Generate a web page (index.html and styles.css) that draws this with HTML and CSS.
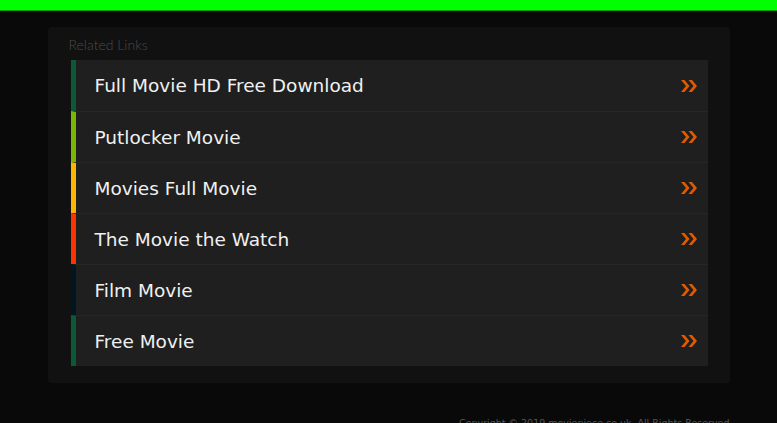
FILE: index.html
```html
<!DOCTYPE html>
<html lang="en">
<head>
    <meta charset="UTF-8">
    <meta name="viewport" content="width=device-width, initial-scale=1.0">
    <title>Related Links</title>
    <link rel="stylesheet" href="styles.css">
</head>
<body>
<div class="top-bar"></div>

<div class="wrapper">
    <div class="panel">
        <h2 class="panel-title">Related Links</h2>
        <ul class="links">
            <li class="link c1"><span>Full Movie HD Free Download</span><svg class="arrow" viewBox="0 0 18 14"><path d="M1 1 L6 7 L1 13 H4.5 L9.5 7 L4.5 1 Z M8.5 1 L13.5 7 L8.5 13 H12 L17 7 L12 1 Z"/></svg></li>
            <li class="link c2"><span>Putlocker Movie</span><svg class="arrow" viewBox="0 0 18 14"><path d="M1 1 L6 7 L1 13 H4.5 L9.5 7 L4.5 1 Z M8.5 1 L13.5 7 L8.5 13 H12 L17 7 L12 1 Z"/></svg></li>
            <li class="link c3"><span>Movies Full Movie</span><svg class="arrow" viewBox="0 0 18 14"><path d="M1 1 L6 7 L1 13 H4.5 L9.5 7 L4.5 1 Z M8.5 1 L13.5 7 L8.5 13 H12 L17 7 L12 1 Z"/></svg></li>
            <li class="link c4"><span>The Movie the Watch</span><svg class="arrow" viewBox="0 0 18 14"><path d="M1 1 L6 7 L1 13 H4.5 L9.5 7 L4.5 1 Z M8.5 1 L13.5 7 L8.5 13 H12 L17 7 L12 1 Z"/></svg></li>
            <li class="link c5"><span>Film Movie</span><svg class="arrow" viewBox="0 0 18 14"><path d="M1 1 L6 7 L1 13 H4.5 L9.5 7 L4.5 1 Z M8.5 1 L13.5 7 L8.5 13 H12 L17 7 L12 1 Z"/></svg></li>
            <li class="link c6"><span>Free Movie</span><svg class="arrow" viewBox="0 0 18 14"><path d="M1 1 L6 7 L1 13 H4.5 L9.5 7 L4.5 1 Z M8.5 1 L13.5 7 L8.5 13 H12 L17 7 L12 1 Z"/></svg></li>
        </ul>
    </div>
    <p class="copyright">Copyright &copy; 2019 moviepiece.co.uk. All Rights Reserved.</p>
</div>
</body>
</html>
```

FILE: styles.css
```css
body {
    margin: 0;
    background-color: #090909;
    font-family: "DejaVu Sans", sans-serif;
}
.top-bar {
    height: 10px;
    background-color: #00ff00;
    border-bottom: 1px solid #00a000;
}
.wrapper {
    width: 682px;
    margin: 16px auto 0;
}
.panel {
    background-color: #111111;
    border-radius: 4px;
    padding: 10px 22px 17px 23px;
}
.panel-title {
    margin: 0 0 7px -2px;
    font-family: Lato, sans-serif;
    font-weight: 300;
    font-size: 14px;
    line-height: 16px;
    color: #4a4a4a;
}
.links {
    list-style: none;
    margin: 0;
    padding: 0;
}
.link {
    display: flex;
    align-items: center;
    justify-content: space-between;
    height: 50px;
    padding: 0 10px 0 19px;
    background-color: #1f1f1f;
    border-left: 5px solid #0b5a37;
    border-top: 1px solid #262626;
    font-size: 18.5px;
    color: #f0f0f0;
}
.link:first-child {
    border-top: none;
    height: 51px;
}
.c1 { border-left-color: #0b5a37; }
.c2 { border-left-color: #7ab800; }
.c3 { border-left-color: #ffb400; }
.c4 { border-left-color: #ff3300; }
.c5 { border-left-color: #001622; }
.c6 { border-left-color: #0b5a37; }
.arrow {
    width: 18px;
    height: 14px;
    fill: #e05a00;
}
.copyright {
    margin: 34px -3px 0 0;
    text-align: right;
    font-size: 9.5px;
    line-height: 12px;
    color: #555555;
}
```
